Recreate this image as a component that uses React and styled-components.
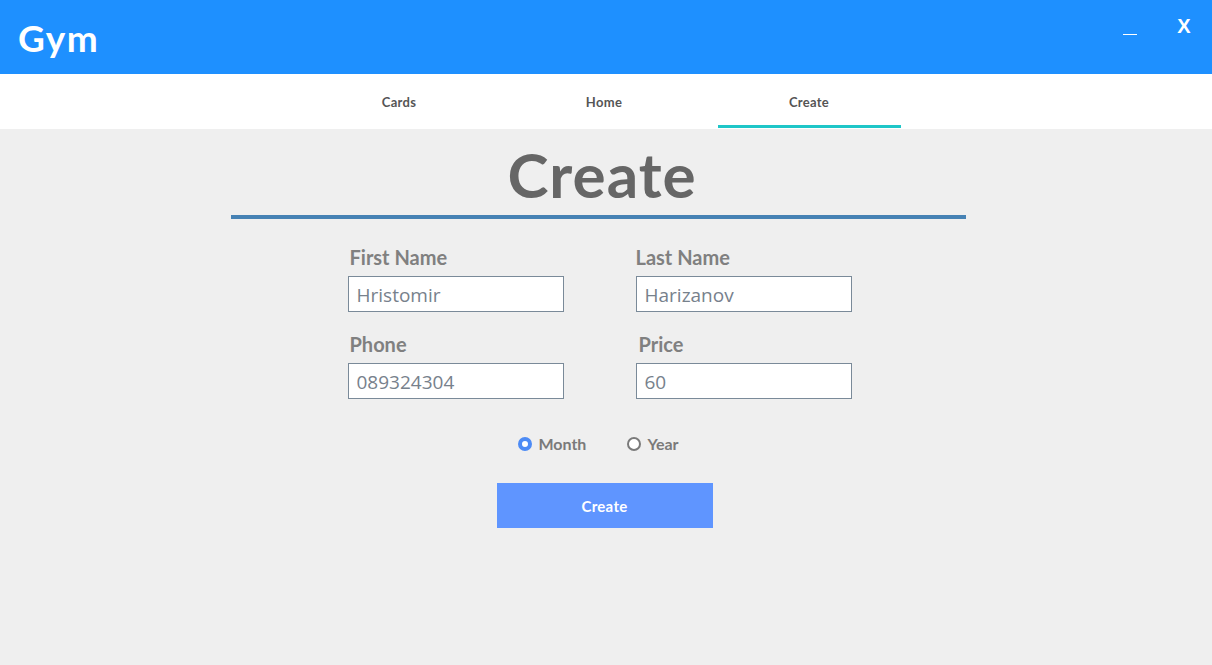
import React, { useState } from 'react';
import styled, { createGlobalStyle } from 'styled-components';

const GlobalStyle = createGlobalStyle`
  html, body {
    margin: 0;
    padding: 0;
    background: #efefef;
    font-family: Lato, "Open Sans", sans-serif;
  }
`;

const Page = styled.div`
  width: 100%;
  min-height: 665px;
  background: #efefef;
`;

const TitleBar = styled.header`
  display: flex;
  align-items: center;
  justify-content: space-between;
  height: 74px;
  padding: 0 0 0 18px;
  background: #1e90ff;
  color: #fff;
`;

const Logo = styled.h1`
  margin: 0;
  font-size: 37px;
  font-weight: 700;
  letter-spacing: 1.5px;
`;

const WindowControls = styled.div`
  display: flex;
  align-self: flex-start;
  padding-top: 12px;
  padding-right: 2px;
`;

const ControlButton = styled.button`
  width: 52px;
  height: 28px;
  border: none;
  background: none;
  color: #fff;
  font-family: "Liberation Sans", Arial, sans-serif;
  font-size: 20px;
  font-weight: 700;
  cursor: pointer;
  display: flex;
  align-items: center;
  justify-content: center;
`;

const MinLine = styled.span`
  display: block;
  width: 14px;
  height: 1px;
  margin-top: 16px;
  margin-right: 4px;
  background: #fff;
`;

const Nav = styled.nav`
  display: flex;
  justify-content: center;
  height: 55px;
  padding-right: 4px;
  background: #fff;
`;

const Tab = styled.div`
  position: relative;
  width: 205px;
  display: flex;
  align-items: center;
  justify-content: center;
  font-size: 13px;
  font-weight: 700;
  letter-spacing: 0.3px;
  color: #555;
  cursor: pointer;
  &::after {
    content: '';
    position: absolute;
    left: 11px;
    right: 11px;
    bottom: 1px;
    height: 3px;
    background: ${(p) => (p.$active ? '#1fc6c8' : 'transparent')};
  }
`;

const Main = styled.main`
  display: flex;
  flex-direction: column;
  align-items: center;
  padding: 9px 15px 0 0;
`;

const Heading = styled.h2`
  width: 735px;
  margin: 0;
  padding: 0 0 5px 7px;
  box-sizing: border-box;
  border-bottom: 4px solid #4682b4;
  text-align: center;
  font-size: 62px;
  line-height: 72px;
  font-weight: 700;
  letter-spacing: 1px;
  color: #666;
`;

const Form = styled.form`
  display: flex;
  flex-direction: column;
  align-items: center;
  padding: 26px 0 0 2px;
`;

const Grid = styled.div`
  display: grid;
  grid-template-columns: 216px 216px;
  column-gap: 72px;
  row-gap: 20px;
`;

const Field = styled.label`
  display: flex;
  flex-direction: column;
  gap: 7px;
`;

const LabelText = styled.span`
  padding-left: ${(p) => p.$inset ?? 2}px;
  font-size: 20px;
  line-height: 24px;
  font-weight: 700;
  color: #808080;
`;

const Input = styled.input`
  box-sizing: border-box;
  width: 216px;
  height: 36px;
  padding: 2px 8px 0;
  border: 1px solid #7a8a99;
  background: #fff;
  font-family: "Open Sans", "Noto Sans", sans-serif;
  font-size: 19px;
  color: #77818c;
  outline: none;
`;

const RadioRow = styled.div`
  display: flex;
  gap: 41px;
  margin-top: 35px;
  padding-right: 2px;
`;

const RadioOption = styled.label`
  display: flex;
  align-items: center;
  gap: 6px;
  font-size: 16px;
  line-height: 20px;
  font-weight: 700;
  color: #7a7a7a;
  cursor: pointer;
`;

const RadioDot = styled.span`
  box-sizing: border-box;
  width: 14px;
  height: 14px;
  border-radius: 50%;
  background: #fff;
  border: ${(p) => (p.$checked ? '4px solid #4d8bf5' : '2px solid #7a7a7a')};
`;

const SubmitButton = styled.button`
  width: 216px;
  height: 45px;
  margin-top: 29px;
  margin-left: 10px;
  border: none;
  background: #5f95ff;
  color: #fff;
  font-family: Lato, sans-serif;
  font-size: 15px;
  font-weight: 700;
  letter-spacing: 0.3px;
  cursor: pointer;
`;

const tabs = ['Cards', 'Home', 'Create'];

export default function App() {
  const [plan, setPlan] = useState('month');
  const [values, setValues] = useState({
    first: 'Hristomir',
    last: 'Harizanov',
    phone: '089324304',
    price: '60',
  });

  const update = (key) => (e) => setValues({ ...values, [key]: e.target.value });

  return (
    <Page>
      <GlobalStyle />
      <TitleBar>
        <Logo>Gym</Logo>
        <WindowControls>
          <ControlButton aria-label="minimize"><MinLine /></ControlButton>
          <ControlButton aria-label="close">X</ControlButton>
        </WindowControls>
      </TitleBar>
      <Nav>
        {tabs.map((t) => (
          <Tab key={t} $active={t === 'Create'}>{t}</Tab>
        ))}
      </Nav>
      <Main>
        <Heading>Create</Heading>
        <Form onSubmit={(e) => e.preventDefault()}>
          <Grid>
            <Field>
              <LabelText>First Name</LabelText>
              <Input value={values.first} onChange={update('first')} />
            </Field>
            <Field>
              <LabelText $inset={0}>Last Name</LabelText>
              <Input value={values.last} onChange={update('last')} />
            </Field>
            <Field>
              <LabelText>Phone</LabelText>
              <Input value={values.phone} onChange={update('phone')} />
            </Field>
            <Field>
              <LabelText $inset={3}>Price</LabelText>
              <Input value={values.price} onChange={update('price')} />
            </Field>
          </Grid>
          <RadioRow>
            <RadioOption onClick={() => setPlan('month')}>
              <RadioDot $checked={plan === 'month'} />
              Month
            </RadioOption>
            <RadioOption onClick={() => setPlan('year')}>
              <RadioDot $checked={plan === 'year'} />
              Year
            </RadioOption>
          </RadioRow>
          <SubmitButton type="submit">Create</SubmitButton>
        </Form>
      </Main>
    </Page>
  );
}
